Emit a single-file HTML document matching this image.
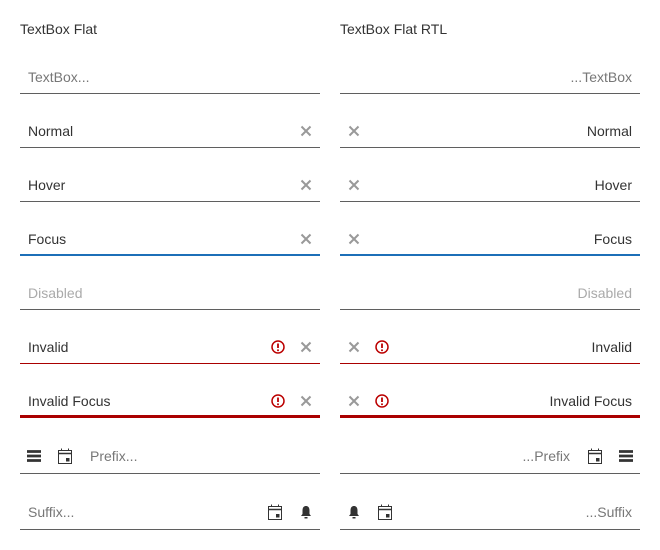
<!DOCTYPE html>
<html><head><style>
body{margin:0;width:660px;height:550px;background:#fff;font-family:"Liberation Sans",sans-serif;position:relative;overflow:hidden}
.t{position:absolute;top:21px;font-size:14px;color:#333}
.f{position:absolute;width:300px;height:33px;border-bottom:1px solid #5f5f5f;box-sizing:border-box}
.f span{position:absolute;top:8px;font-size:14px;color:#333;white-space:nowrap}
.ph{color:#777!important}
.dis{color:#aaa!important}
.foc{border-bottom:2px solid #1c6fb8}
.inv{border-bottom:1px solid #a00}
.invf{border-bottom:3px solid #a00}
.pf span{top:7px}
svg{position:absolute}
</style></head><body>
<svg width="0" height="0" style="position:absolute">
<defs>
<symbol id="x" viewBox="0 0 12 12"><path d="M1.5 1.5L10.5 10.5M10.5 1.5L1.5 10.5" stroke="#999" stroke-width="2"/></symbol>
<symbol id="e" viewBox="0 0 14 14"><circle cx="7" cy="7" r="6" fill="none" stroke="#b00" stroke-width="1.5"/><path d="M7 3.5V8" stroke="#b00" stroke-width="1.8"/><circle cx="7" cy="10.2" r="1" fill="#b00"/></symbol>
<symbol id="m" viewBox="0 0 14 12"><path d="M0 1.5H14M0 6H14M0 10.5H14" stroke="#333" stroke-width="2.8"/></symbol>
<symbol id="c" viewBox="0 0 14 16"><rect x="0.5" y="2.5" width="13" height="13" fill="none" stroke="#333"/><path d="M0.5 5.5H13.5" stroke="#333" stroke-width="1.5"/><path d="M3.5 0.5V3M10.5 0.5V3" stroke="#333"/><rect x="8" y="10" width="3.5" height="3.5" fill="#333"/></symbol>
<symbol id="b" viewBox="0 0 14 14"><path d="M7 1C4.5 1 3.5 3 3.5 5.5V9L2 11H12L10.5 9V5.5C10.5 3 9.5 1 7 1Z" fill="#333"/><rect x="5.5" y="12" width="3" height="1.5" fill="#333"/></symbol>
</defs></svg>

<div class="t" style="left:20px">TextBox Flat</div>
<div class="t" style="left:340px">TextBox Flat RTL</div>

<!-- LEFT -->
<div class="f" style="left:20px;top:61px"><span class="ph" style="left:8px">TextBox...</span></div>
<div class="f" style="left:20px;top:115px"><span style="left:8px">Normal</span><svg style="left:280px;top:10px" width="12" height="12"><use href="#x"/></svg></div>
<div class="f" style="left:20px;top:169px"><span style="left:8px">Hover</span><svg style="left:280px;top:10px" width="12" height="12"><use href="#x"/></svg></div>
<div class="f foc" style="left:20px;top:223px"><span style="left:8px">Focus</span><svg style="left:280px;top:10px" width="12" height="12"><use href="#x"/></svg></div>
<div class="f" style="left:20px;top:277px"><span class="dis" style="left:8px">Disabled</span></div>
<div class="f inv" style="left:20px;top:331px"><span style="left:8px">Invalid</span><svg style="left:251px;top:9px" width="14" height="14"><use href="#e"/></svg><svg style="left:280px;top:10px" width="12" height="12"><use href="#x"/></svg></div>
<div class="f invf" style="left:20px;top:385px"><span style="left:8px">Invalid Focus</span><svg style="left:251px;top:9px" width="14" height="14"><use href="#e"/></svg><svg style="left:280px;top:10px" width="12" height="12"><use href="#x"/></svg></div>
<div class="f pf" style="left:20px;top:441px;height:33px"><svg style="left:7px;top:9px" width="14" height="12"><use href="#m"/></svg><svg style="left:38px;top:7px" width="14" height="16"><use href="#c"/></svg><span class="ph" style="left:70px">Prefix...</span></div>
<div class="f pf" style="left:20px;top:497px;height:33px"><span class="ph" style="left:8px">Suffix...</span><svg style="left:248px;top:7px" width="14" height="16"><use href="#c"/></svg><svg style="left:279px;top:8px" width="14" height="14"><use href="#b"/></svg></div>

<!-- RIGHT -->
<div class="f" style="left:340px;top:61px"><span class="ph" style="right:8px">...TextBox</span></div>
<div class="f" style="left:340px;top:115px"><span style="right:8px">Normal</span><svg style="left:8px;top:10px" width="12" height="12"><use href="#x"/></svg></div>
<div class="f" style="left:340px;top:169px"><span style="right:8px">Hover</span><svg style="left:8px;top:10px" width="12" height="12"><use href="#x"/></svg></div>
<div class="f foc" style="left:340px;top:223px"><span style="right:8px">Focus</span><svg style="left:8px;top:10px" width="12" height="12"><use href="#x"/></svg></div>
<div class="f" style="left:340px;top:277px"><span class="dis" style="right:8px">Disabled</span></div>
<div class="f inv" style="left:340px;top:331px"><span style="right:8px">Invalid</span><svg style="left:8px;top:10px" width="12" height="12"><use href="#x"/></svg><svg style="left:35px;top:9px" width="14" height="14"><use href="#e"/></svg></div>
<div class="f invf" style="left:340px;top:385px"><span style="right:8px">Invalid Focus</span><svg style="left:8px;top:10px" width="12" height="12"><use href="#x"/></svg><svg style="left:35px;top:9px" width="14" height="14"><use href="#e"/></svg></div>
<div class="f pf" style="left:340px;top:441px;height:33px"><span class="ph" style="right:70px">...Prefix</span><svg style="left:248px;top:7px" width="14" height="16"><use href="#c"/></svg><svg style="left:279px;top:9px" width="14" height="12"><use href="#m"/></svg></div>
<div class="f pf" style="left:340px;top:497px;height:33px"><svg style="left:7px;top:8px" width="14" height="14"><use href="#b"/></svg><svg style="left:38px;top:7px" width="14" height="16"><use href="#c"/></svg><span class="ph" style="right:8px">...Suffix</span></div>
</body></html>
